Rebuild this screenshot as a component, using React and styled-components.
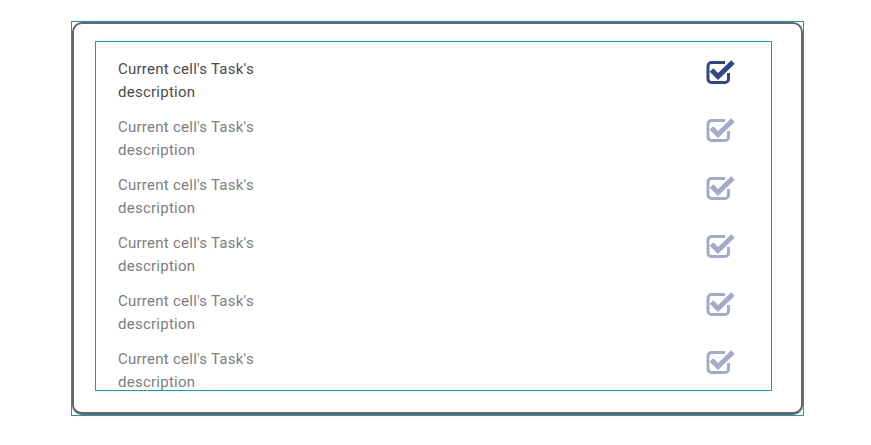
import styled, { createGlobalStyle } from 'styled-components';

const GlobalStyle = createGlobalStyle`
    body {
        margin: 0;
        background: #fff;
        font-family: Roboto, "Liberation Sans", sans-serif;
    }
`;

const Page = styled.div`
    padding: 21px 0 0 71px;
`;

const Frame = styled.div`
    width: 733px;
    height: 395px;
    box-sizing: border-box;
    border: 1px solid #0f9ac8;
    display: flex;
`;

const Card = styled.div`
    flex: 1;
    box-sizing: border-box;
    border: 2px solid #666;
    border-bottom-width: 3px;
    border-radius: 10px;
    padding: 17px 0 0 21px;
`;

const List = styled.div`
    width: 677px;
    height: 350px;
    box-sizing: border-box;
    border: 1px solid #0f9ac8;
    overflow: hidden;
    padding-top: 10px;
`;

const Row = styled.div`
    display: flex;
    justify-content: space-between;
    align-items: flex-start;
    padding: 6px 36px 6px 22px;
`;

const Text = styled.div`
    width: 170px;
    font-size: 15px;
    line-height: 23px;
    letter-spacing: 0.25px;
    color: ${(props) => (props.active ? '#4a4a4a' : '#7d7d7d')};
`;

const CheckIcon = ({ color }) => (
    <svg width="29" height="28" viewBox="0 0 29 28">
        <path
            d="M19 4.5 H5.5 a3.5 3.5 0 0 0 -3.5 3.5 V21 a3.5 3.5 0 0 0 3.5 3.5 H19 a3.5 3.5 0 0 0 3.5 -3.5 V15"
            fill="none"
            stroke={color}
            strokeWidth="3"
        />
        <polyline
            points="5.5,12 12,18.5 27,4"
            fill="none"
            stroke={color}
            strokeWidth="5"
            strokeLinejoin="miter"
        />
    </svg>
);

const tasks = [0, 1, 2, 3, 4, 5];

export default function App() {
    return (
        <>
            <GlobalStyle />
            <Page>
                <Frame>
                    <Card>
                        <List>
                            {tasks.map((i) => (
                                <Row key={i}>
                                    <Text active={i === 0}>Current cell's Task's description</Text>
                                    <CheckIcon color={i === 0 ? '#2f4687' : '#a4abc9'} />
                                </Row>
                            ))}
                        </List>
                    </Card>
                </Frame>
            </Page>
        </>
    );
}
